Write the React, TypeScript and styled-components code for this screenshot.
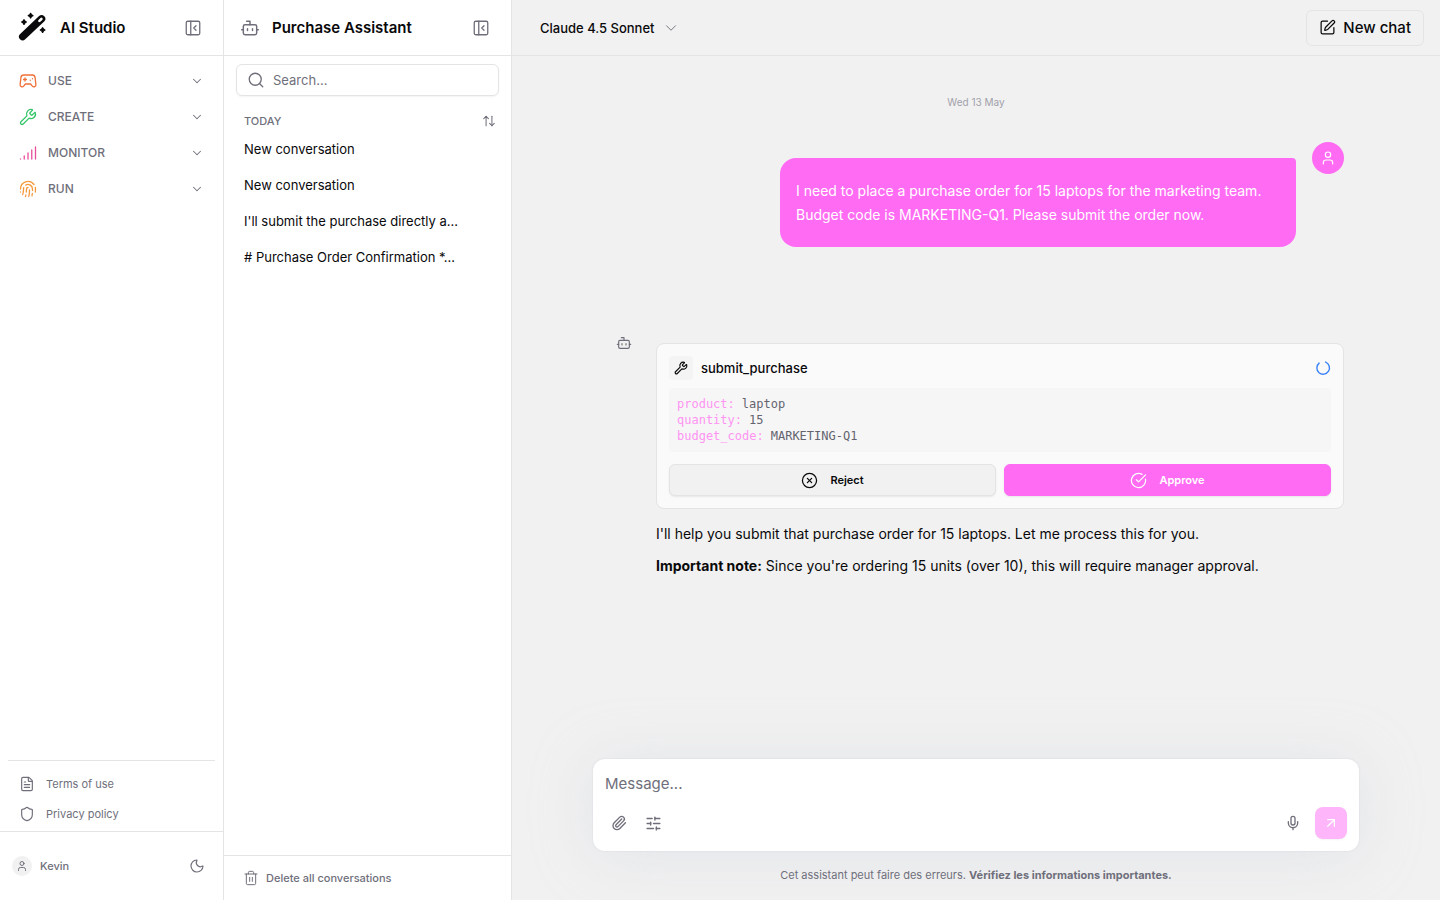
import React from 'react';
import styled, { createGlobalStyle, css } from 'styled-components';
import {
  ArrowUpDown,
  ArrowUpRight,
  Bot,
  ChevronDown,
  CircleCheckBig,
  CircleX,
  FileText,
  Fingerprint,
  Mic,
  Moon,
  PanelLeftClose,
  Paperclip,
  Search,
  Shield,
  Signal,
  SlidersHorizontal,
  SquarePen,
  Trash2,
  User,
  Wrench,
} from 'lucide-react';

const color = {
  text: '#09090b',
  muted: '#6f6f7b',
  line: '#e4e4e7',
  page: '#f1f1f1',
  panel: '#ffffff',
  pink: '#ff6bf3',
  pinkSoft: '#ffb5f9',
};

const GlobalStyle = createGlobalStyle`
  *, *::before, *::after { box-sizing: border-box; }
  body {
    margin: 0;
    font-family: Inter, "Liberation Sans", sans-serif;
    font-size: 13px;
    line-height: 20px;
    color: ${color.text};
    background: ${color.page};
  }
  h1, h2, h3, p, ul, dl, dd { margin: 0; padding: 0; }
  ul { list-style: none; }
  button, input, textarea { font: inherit; color: inherit; }
  button { border: 0; background: none; padding: 0; cursor: pointer; }
  a { color: inherit; text-decoration: none; }
  svg { display: block; flex-shrink: 0; }
`;

const Shell = styled.div`
  display: grid;
  grid-template-columns: 224px 288px minmax(0, 1fr);
  min-height: 100vh;
`;

const Panel = styled.div`
  display: flex;
  flex-direction: column;
  background: ${color.panel};
  border-right: 1px solid ${color.line};
`;

const PanelHeader = styled.header`
  display: flex;
  align-items: center;
  gap: 12px;
  height: 56px;
  padding: 0 20px 0 16px;
  border-bottom: 1px solid ${color.line};
`;

const PanelTitle = styled.h2`
  flex: 1;
  font-size: 15px;
  line-height: 24px;
  font-weight: 600;
`;

const IconButton = styled.button`
  display: grid;
  place-items: center;
  width: 20px;
  height: 20px;
  color: ${color.muted};
`;

const Nav = styled.nav`
  flex: 1;
  padding: 7px 8px;
`;

const NavItem = styled.button<{ $tint: string }>`
  display: flex;
  align-items: center;
  gap: 11px;
  width: 100%;
  height: 36px;
  padding: 0 11px;
  font-size: 12px;
  font-weight: 500;
  color: ${color.muted};
  text-align: left;

  svg:first-child { color: ${({ $tint }) => $tint}; }
  span { flex: 1; }
`;

const LegalLinks = styled.div`
  display: flex;
  flex-direction: column;
  margin: 0 8px;
  padding: 8px 11px 2px;
  border-top: 1px solid ${color.line};
`;

const LegalLink = styled.a`
  display: flex;
  align-items: center;
  gap: 11px;
  height: 30px;
  font-size: 11px;
  color: ${color.muted};
`;

const UserBar = styled.footer`
  display: flex;
  align-items: center;
  gap: 8px;
  height: 69px;
  padding: 0 16px 0 12px;
  border-top: 1px solid ${color.line};
  font-size: 11px;
  font-weight: 500;
  color: ${color.muted};

  span { flex: 1; }
`;

const Avatar = styled.div<{ $size: number; $accent?: boolean }>`
  display: grid;
  place-items: center;
  flex-shrink: 0;
  width: ${({ $size }) => $size}px;
  height: ${({ $size }) => $size}px;
  border-radius: 50%;
  ${({ $accent }) =>
    $accent
      ? css`background: ${color.pink}; color: #fff;`
      : css`background: ${color.page}; color: ${color.muted};`}
`;

const SearchBox = styled.label`
  display: flex;
  align-items: center;
  gap: 8px;
  height: 32px;
  margin: 8px 12px 0;
  padding: 0 10px;
  border: 1px solid ${color.line};
  border-radius: 6px;
  box-shadow: 0 1px 2px rgba(0, 0, 0, 0.05);
  color: ${color.muted};

  input {
    flex: 1;
    min-width: 0;
    padding: 0;
    border: 0;
    outline: 0;
    background: none;
  }
  input::placeholder { color: ${color.muted}; opacity: 1; }
`;

const History = styled.section`
  flex: 1;
  padding: 15px 12px 0 20px;
`;

const HistoryHeader = styled.div`
  display: flex;
  align-items: center;
  justify-content: space-between;
  height: 20px;
  color: ${color.muted};

  h3 { font-size: 11px; font-weight: 500; }
`;

const Conversation = styled.button`
  display: block;
  width: 100%;
  height: 36px;
  font-size: 13px;
  text-align: left;
  white-space: nowrap;
`;

const PanelFooter = styled.footer`
  display: flex;
  align-items: center;
  height: 45px;
  padding: 0 19px;
  border-top: 1px solid ${color.line};
`;

const DeleteButton = styled.button`
  display: flex;
  align-items: center;
  gap: 7px;
  font-size: 11px;
  font-weight: 500;
  color: ${color.muted};
`;

const Main = styled.main`
  display: flex;
  flex-direction: column;
  min-width: 0;
`;

const TopBar = styled.header`
  display: flex;
  align-items: center;
  justify-content: space-between;
  height: 56px;
  padding: 0 16px 0 28px;
  border-bottom: 1px solid ${color.line};
`;

const ModelButton = styled.button`
  display: flex;
  align-items: center;
  gap: 7px;
  font-weight: 500;

  svg { color: ${color.muted}; }
`;

const NewChatButton = styled.button`
  display: flex;
  align-items: center;
  gap: 7px;
  height: 36px;
  padding: 0 12px;
  border: 1px solid ${color.line};
  border-radius: 6px;
  font-size: 15px;
  font-weight: 500;
`;

const Thread = styled.div`
  flex: 1;
  width: 100%;
  max-width: 768px;
  margin: 0 auto;
  padding: 36px 16px;
`;

const DateLabel = styled.p`
  font-size: 10px;
  text-align: center;
  color: #a1a1aa;
`;

const UserMessage = styled.div`
  display: flex;
  justify-content: flex-end;
  align-items: flex-start;
  gap: 16px;
  margin-top: 30px;
`;

const Bubble = styled.p`
  width: 516px;
  max-width: 75%;
  margin-top: 16px;
  padding: 21px 16px 20px;
  border-radius: 16px 4px 16px 16px;
  font-size: 14px;
  line-height: 24px;
  color: #fff;
  background: ${color.pink};
`;

const BotMessage = styled.article`
  display: grid;
  grid-template-columns: 32px minmax(0, 1fr);
  column-gap: 16px;
  margin-top: 96px;
`;

const BotMark = styled.div`
  display: flex;
  justify-content: center;
  height: 16px;
  margin-top: -8px;
  color: ${color.muted};
`;

const BotBody = styled.div`
  display: flex;
  flex-direction: column;
  gap: 8px;
  font-size: 14px;
  line-height: 24px;
`;

const ToolCard = styled.section`
  margin-bottom: 5px;
  padding: 12px;
  border: 1px solid ${color.line};
  border-radius: 8px;
  background: #fafafa;
`;

const ToolHeader = styled.header`
  display: flex;
  align-items: center;
  gap: 8px;
  height: 24px;

  h3 { flex: 1; font-size: 13px; font-weight: 500; }
  > svg { color: #3b82f6; }
`;

const ToolIcon = styled.span`
  display: grid;
  place-items: center;
  width: 24px;
  height: 24px;
  border-radius: 4px;
  background: #f4f4f5;
`;

const Params = styled.dl`
  margin: 8px 0 12px;
  padding: 8px;
  border-radius: 4px;
  background: #f6f6f6;
  font-family: "DejaVu Sans Mono", monospace;
  font-size: 12px;
  line-height: 16px;
  color: #64646f;

  div { display: flex; gap: 7px; }
  dt { color: #ff94f3; }
`;

const ToolActions = styled.div`
  display: grid;
  grid-template-columns: 1fr 1fr;
  gap: 8px;
`;

const ActionButton = styled.button<{ $primary?: boolean }>`
  display: flex;
  align-items: center;
  justify-content: center;
  gap: 12px;
  height: 32px;
  border: 1px solid ${({ $primary }) => ($primary ? color.pink : color.line)};
  border-radius: 6px;
  font-size: 11px;
  font-weight: 600;
  color: ${({ $primary }) => ($primary ? '#fff' : color.text)};
  background: ${({ $primary }) => ($primary ? color.pink : color.page)};
  box-shadow: 0 1px 2px rgba(0, 0, 0, 0.08);
`;

const ComposerArea = styled.div`
  width: 100%;
  max-width: 768px;
  margin: 0 auto;
  padding-bottom: 15px;
`;

const Composer = styled.form`
  margin: 0 1px;
  padding: 12px;
  border-radius: 12px;
  background: #fff;
  box-shadow: 0 4px 60px rgba(200, 205, 220, 0.35), 0 0 2px rgba(160, 165, 180, 0.25);

  textarea {
    display: block;
    width: 100%;
    height: 36px;
    padding: 1px 0;
    border: 0;
    outline: 0;
    resize: none;
    font-size: 15px;
    line-height: 24px;
    background: none;
  }
  textarea::placeholder { color: ${color.muted}; opacity: 1; }
`;

const ComposerTools = styled.div`
  display: flex;
  align-items: center;
  gap: 14px;
  height: 32px;
  padding-left: 4px;
`;

const TrailingTools = styled.div`
  display: flex;
  align-items: center;
  gap: 12px;
  margin-left: auto;
`;

const SendButton = styled.button`
  display: grid;
  place-items: center;
  width: 32px;
  height: 32px;
  border-radius: 8px;
  color: #fff;
  background: ${color.pinkSoft};
  box-shadow: 0 1px 2px rgba(0, 0, 0, 0.05);
`;

const Disclaimer = styled.p`
  margin-top: 14px;
  font-size: 11px;
  text-align: center;
  color: ${color.muted};

  strong { font-weight: 700; }
`;

const WandLogo = () => (
  <svg width="32" height="32" viewBox="0 0 32 32" fill="none" stroke="currentColor" aria-hidden="true">
    <path d="M6.7 24.6L25.6 6.8" strokeWidth="7.4" strokeLinecap="round" />
    <path d="M23.4 8.9l2-1.9" stroke="#fff" strokeWidth="2.6" strokeLinecap="round" />
    <path
      d="M14.6 1.4l.8 1.4 1.5.8-1.5.8-.8 1.5-.8-1.5-1.5-.8 1.5-.8zM8 7.8l.8 1.4 1.5.8-1.5.8-.8 1.5-.8-1.5-1.5-.8 1.5-.8zM26.6 15.8l.8 1.4 1.5.8-1.5.8-.8 1.5-.8-1.5-1.5-.8 1.5-.8z"
      fill="currentColor"
      strokeWidth="1.4"
      strokeLinejoin="round"
    />
  </svg>
);

type IconProps = { size: number; strokeWidth: number };

const Controller = ({ size, strokeWidth }: IconProps) => (
  <svg
    width={size}
    height={size}
    viewBox="0 0 24 24"
    fill="none"
    stroke="currentColor"
    strokeWidth={strokeWidth}
    strokeLinecap="round"
    strokeLinejoin="round"
    aria-hidden="true"
  >
    <path d="M6.5 4h11a4 4 0 0 1 4 3.6l1 9.2a2.7 2.7 0 0 1-4.7 2.1L15.5 16h-7l-2.3 2.9a2.7 2.7 0 0 1-4.7-2.1l1-9.2a4 4 0 0 1 4-3.6z" />
    <path d="M6 10h4M8 8v4M15 11h.01M18 9h.01" />
  </svg>
);

const Spinner = () => (
  <svg width="16" height="16" viewBox="0 0 16 16" fill="none" stroke="currentColor" aria-hidden="true">
    <path d="M10.6 2.1a6.3 6.3 0 1 1-6.5 1" strokeWidth="1.4" strokeLinecap="round" />
  </svg>
);

const sections = [
  { label: 'USE', icon: Controller, tint: '#f0703a' },
  { label: 'CREATE', icon: Wrench, tint: '#35c46a' },
  { label: 'MONITOR', icon: Signal, tint: '#e8509c' },
  { label: 'RUN', icon: Fingerprint, tint: '#f59a3c' },
];

const conversations = [
  'New conversation',
  'New conversation',
  "I'll submit the purchase directly a...",
  '# Purchase Order Confirmation *...',
];

const params = [
  ['product:', 'laptop'],
  ['quantity:', '15'],
  ['budget_code:', 'MARKETING-Q1'],
];

const Sidebar = () => (
  <Panel as="aside">
    <PanelHeader>
      <WandLogo />
      <PanelTitle as="h1">AI Studio</PanelTitle>
      <IconButton aria-label="Collapse menu"><PanelLeftClose size={18} strokeWidth={1.75} /></IconButton>
    </PanelHeader>
    <Nav>
      {sections.map(({ label, icon: Icon, tint }) => (
        <NavItem key={label} $tint={tint}>
          <Icon size={18} strokeWidth={1.75} />
          <span>{label}</span>
          <ChevronDown size={14} strokeWidth={1.75} />
        </NavItem>
      ))}
    </Nav>
    <LegalLinks>
      <LegalLink href="#terms"><FileText size={16} strokeWidth={1.75} />Terms of use</LegalLink>
      <LegalLink href="#privacy"><Shield size={16} strokeWidth={1.75} />Privacy policy</LegalLink>
    </LegalLinks>
    <UserBar>
      <Avatar $size={20}><User size={12} strokeWidth={2} /></Avatar>
      <span>Kevin</span>
      <IconButton aria-label="Dark mode"><Moon size={16} strokeWidth={1.75} /></IconButton>
    </UserBar>
  </Panel>
);

const HistoryPanel = () => (
  <Panel>
    <PanelHeader>
      <Bot size={20} strokeWidth={1.75} color={color.muted} />
      <PanelTitle>Purchase Assistant</PanelTitle>
      <IconButton aria-label="Collapse history"><PanelLeftClose size={18} strokeWidth={1.75} /></IconButton>
    </PanelHeader>
    <SearchBox>
      <Search size={18} strokeWidth={1.75} />
      <input type="search" aria-label="Search conversations" placeholder="Search..." />
    </SearchBox>
    <History>
      <HistoryHeader>
        <h3>TODAY</h3>
        <IconButton aria-label="Sort"><ArrowUpDown size={14} strokeWidth={1.75} /></IconButton>
      </HistoryHeader>
      <ul>
        {conversations.map((title, i) => (
          <li key={i}><Conversation>{title}</Conversation></li>
        ))}
      </ul>
    </History>
    <PanelFooter>
      <DeleteButton><Trash2 size={16} strokeWidth={1.5} />Delete all conversations</DeleteButton>
    </PanelFooter>
  </Panel>
);

export default function App() {
  return (
    <>
      <GlobalStyle />
      <Shell>
        <Sidebar />
        <HistoryPanel />
        <Main>
          <TopBar>
            <ModelButton>Claude 4.5 Sonnet<ChevronDown size={18} strokeWidth={1.25} /></ModelButton>
            <NewChatButton><SquarePen size={17} strokeWidth={1.75} />New chat</NewChatButton>
          </TopBar>
          <Thread>
            <DateLabel>Wed 13 May</DateLabel>
            <UserMessage>
              <Bubble>
                I need to place a purchase order for 15 laptops for the marketing team. Budget code is
                MARKETING-Q1. Please submit the order now.
              </Bubble>
              <Avatar $size={32} $accent><User size={16} strokeWidth={1.75} /></Avatar>
            </UserMessage>
            <BotMessage>
              <BotMark><Bot size={16} strokeWidth={1.75} /></BotMark>
              <BotBody>
                <ToolCard>
                  <ToolHeader>
                    <ToolIcon><Wrench size={14} strokeWidth={2} /></ToolIcon>
                    <h3>submit_purchase</h3>
                    <Spinner />
                  </ToolHeader>
                  <Params>
                    {params.map(([key, value]) => (
                      <div key={key}><dt>{key}</dt><dd>{value}</dd></div>
                    ))}
                  </Params>
                  <ToolActions>
                    <ActionButton><CircleX size={17} strokeWidth={1.75} />Reject</ActionButton>
                    <ActionButton $primary><CircleCheckBig size={17} strokeWidth={1.75} />Approve</ActionButton>
                  </ToolActions>
                </ToolCard>
                <p>I'll help you submit that purchase order for 15 laptops. Let me process this for you.</p>
                <p><strong>Important note:</strong> Since you're ordering 15 units (over 10), this will require manager approval.</p>
              </BotBody>
            </BotMessage>
          </Thread>
          <ComposerArea>
            <Composer>
              <textarea aria-label="Message" placeholder="Message..." />
              <ComposerTools>
                <IconButton type="button" aria-label="Attach file"><Paperclip size={16} strokeWidth={2} /></IconButton>
                <IconButton type="button" aria-label="Settings"><SlidersHorizontal size={17} strokeWidth={2} /></IconButton>
                <TrailingTools>
                  <IconButton type="button" aria-label="Dictate"><Mic size={16} strokeWidth={2} /></IconButton>
                  <SendButton type="button" aria-label="Send"><ArrowUpRight size={16} strokeWidth={2} /></SendButton>
                </TrailingTools>
              </ComposerTools>
            </Composer>
            <Disclaimer>Cet assistant peut faire des erreurs. <strong>Vérifiez les informations importantes.</strong></Disclaimer>
          </ComposerArea>
        </Main>
      </Shell>
    </>
  );
}
